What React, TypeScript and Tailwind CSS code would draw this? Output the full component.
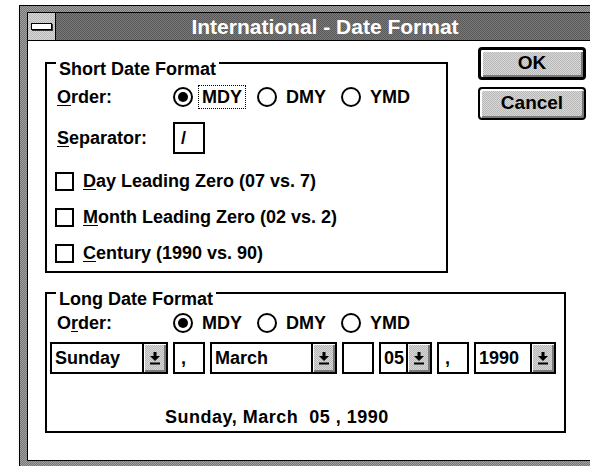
import type { ReactNode } from "react";

// Win 3.1 style "International - Date Format" dialog

const checkerFrame =
  "bg-[repeating-conic-gradient(#767676_0%_25%,#a0a0a0_0%_50%)] bg-[length:2px_2px]";
const checkerTitle =
  "bg-[repeating-conic-gradient(#585858_0%_25%,#7a7a7a_0%_50%)] bg-[length:2px_2px]";
const checkerFace =
  "bg-[repeating-conic-gradient(#b8b8b8_0%_25%,#d8d8d8_0%_50%)] bg-[length:2px_2px]";

function GroupBox({
  title,
  className,
  children,
}: {
  title: string;
  className: string;
  children: ReactNode;
}) {
  return (
    <div className={`flex flex-col border-x-2 border-b-2 border-black ${className}`}>
      <div className="flex h-[14px] items-start">
        <span className="h-0 w-[9px] border-t-2 border-black" />
        <span className="px-[3px] text-[18px] leading-[14px] font-bold">{title}</span>
        <span className="h-0 flex-1 border-t-2 border-black" />
      </div>
      {children}
    </div>
  );
}

function Radio({ label, checked, focus }: { label: string; checked?: boolean; focus?: boolean }) {
  return (
    <div className="flex items-center">
      <span className="flex h-[20px] w-[20px] items-center justify-center rounded-full border-2 border-black">
        {checked && <span className="h-[10px] w-[10px] rounded-full bg-black" />}
      </span>
      <span
        className={`ml-[5px] border border-dotted px-[3px] leading-[22px] ${
          focus ? "border-black" : "border-transparent"
        }`}
      >
        {label}
      </span>
    </div>
  );
}

function OrderRow({ label, focus }: { label: ReactNode; focus?: boolean }) {
  return (
    <div className="flex h-[22px] items-center pl-[10px]">
      <span className="w-[116px] leading-[20px]">{label}</span>
      <div className="flex gap-[11px]">
        <Radio label="MDY" checked focus={focus} />
        <Radio label="DMY" />
        <Radio label="YMD" />
      </div>
    </div>
  );
}

function Check({ children }: { children: ReactNode }) {
  return (
    <div className="flex h-[22px] items-center pl-[8px]">
      <span className="h-[19px] w-[19px] border-2 border-black bg-white" />
      <span className="ml-[9px] leading-[20px]">{children}</span>
    </div>
  );
}

function ArrowButton() {
  return (
    <span
      className={`flex w-[24px] items-center justify-center border-l-2 border-black ${checkerFace} shadow-[inset_1px_1px_0_#fff,inset_-2px_-2px_0_#7a7a7a]`}
    >
      <svg width="12" height="14" viewBox="0 0 12 14">
        <rect x="4.5" y="1" width="3" height="4" fill="#000" />
        <polygon points="1,5 11,5 6,10" fill="#000" />
        <rect x="1" y="11.5" width="10" height="2" fill="#000" />
      </svg>
    </span>
  );
}

function Combo({ value, className }: { value: string; className: string }) {
  return (
    <div className={`flex h-[32px] border-2 border-black bg-white ${className}`}>
      <span className="flex-1 pl-[3px] leading-[28px]">{value}</span>
      <ArrowButton />
    </div>
  );
}

function Edit({ value }: { value: string }) {
  return (
    <div className="h-[32px] w-[32px] border-2 border-black bg-white pl-[6px] leading-[28px]">
      {value}
    </div>
  );
}

function Button({ label, isDefault }: { label: string; isDefault?: boolean }) {
  return (
    <div
      className={`flex h-[33px] w-[108px] items-center justify-center rounded-[4px] border-black ${
        isDefault ? "border-[3px]" : "border-2"
      } ${checkerFace} shadow-[inset_2px_2px_0_#fff,inset_-2px_-2px_0_#7a7a7a] text-[19px]`}
    >
      {label}
    </div>
  );
}

export default function App() {
  return (
    <div className="h-[466px] w-[590px] overflow-hidden bg-white pl-[19px] pt-[5px] text-[18px] font-bold text-black font-['Liberation_Sans',Arial,sans-serif]">
      <div className={`h-[480px] w-[584px] border border-black px-[7px] pt-[6px] ${checkerFrame}`}>
        <div className="flex h-[449px] flex-col border border-black bg-white">
          {/* title bar */}
          <div className="flex h-[28px] border-b border-black">
            <div className={`flex w-[28px] items-center justify-center border-r border-black ${checkerFace}`}>
              <span className="h-[7px] w-[21px] border border-black bg-white shadow-[1px_1px_0_#333]" />
            </div>
            <div
              className={`flex flex-1 items-center justify-center text-[21px] leading-[26px] text-white ${checkerTitle}`}
            >
              International - Date Format
            </div>
          </div>

          {/* client area */}
          <div className="flex flex-col pl-[17px] pt-[6px]">
            <div className="flex items-start">
              <GroupBox title="Short Date Format" className="mt-[15px] h-[211px] w-[403px]">
                <div className="mt-[10px]">
                  <OrderRow
                    focus
                    label={
                      <>
                        <u className="underline-offset-2">O</u>rder:
                      </>
                    }
                  />
                </div>
                <div className="mt-[14px] flex h-[32px] items-center pl-[10px]">
                  <span className="w-[116px] leading-[20px]">
                    <u className="underline-offset-2">S</u>eparator:
                  </span>
                  <Edit value="/" />
                </div>
                <div className="mt-[16px] flex flex-col gap-[14px]">
                  <Check>
                    <u className="underline-offset-2">D</u>ay Leading Zero (07 vs. 7)
                  </Check>
                  <Check>
                    <u className="underline-offset-2">M</u>onth Leading Zero (02 vs. 2)
                  </Check>
                  <Check>
                    <u className="underline-offset-2">C</u>entury (1990 vs. 90)
                  </Check>
                </div>
              </GroupBox>

              <div className="ml-[30px] flex flex-col gap-[7px]">
                <Button label="OK" isDefault />
                <Button label="Cancel" />
              </div>
            </div>

            <GroupBox title="Long Date Format" className="mt-[19px] h-[141px] w-[521px]">
              <div className="mt-[6px]">
                <OrderRow
                  label={
                    <>
                      O<u className="underline-offset-2">r</u>der:
                    </>
                  }
                />
              </div>
              <div className="ml-[3px] mt-[8px] flex gap-[5px]">
                <Combo value="Sunday" className="w-[118px]" />
                <Edit value="," />
                <Combo value="March" className="w-[127px]" />
                <Edit value="" />
                <Combo value="05" className="w-[53px]" />
                <Edit value="," />
                <Combo value="1990" className="w-[82px]" />
              </div>
              <div className="ml-[118px] mt-[33px] whitespace-pre leading-[20px] tracking-[0.5px]">
                Sunday, March  05 , 1990
              </div>
            </GroupBox>
          </div>
        </div>
      </div>
    </div>
  );
}
